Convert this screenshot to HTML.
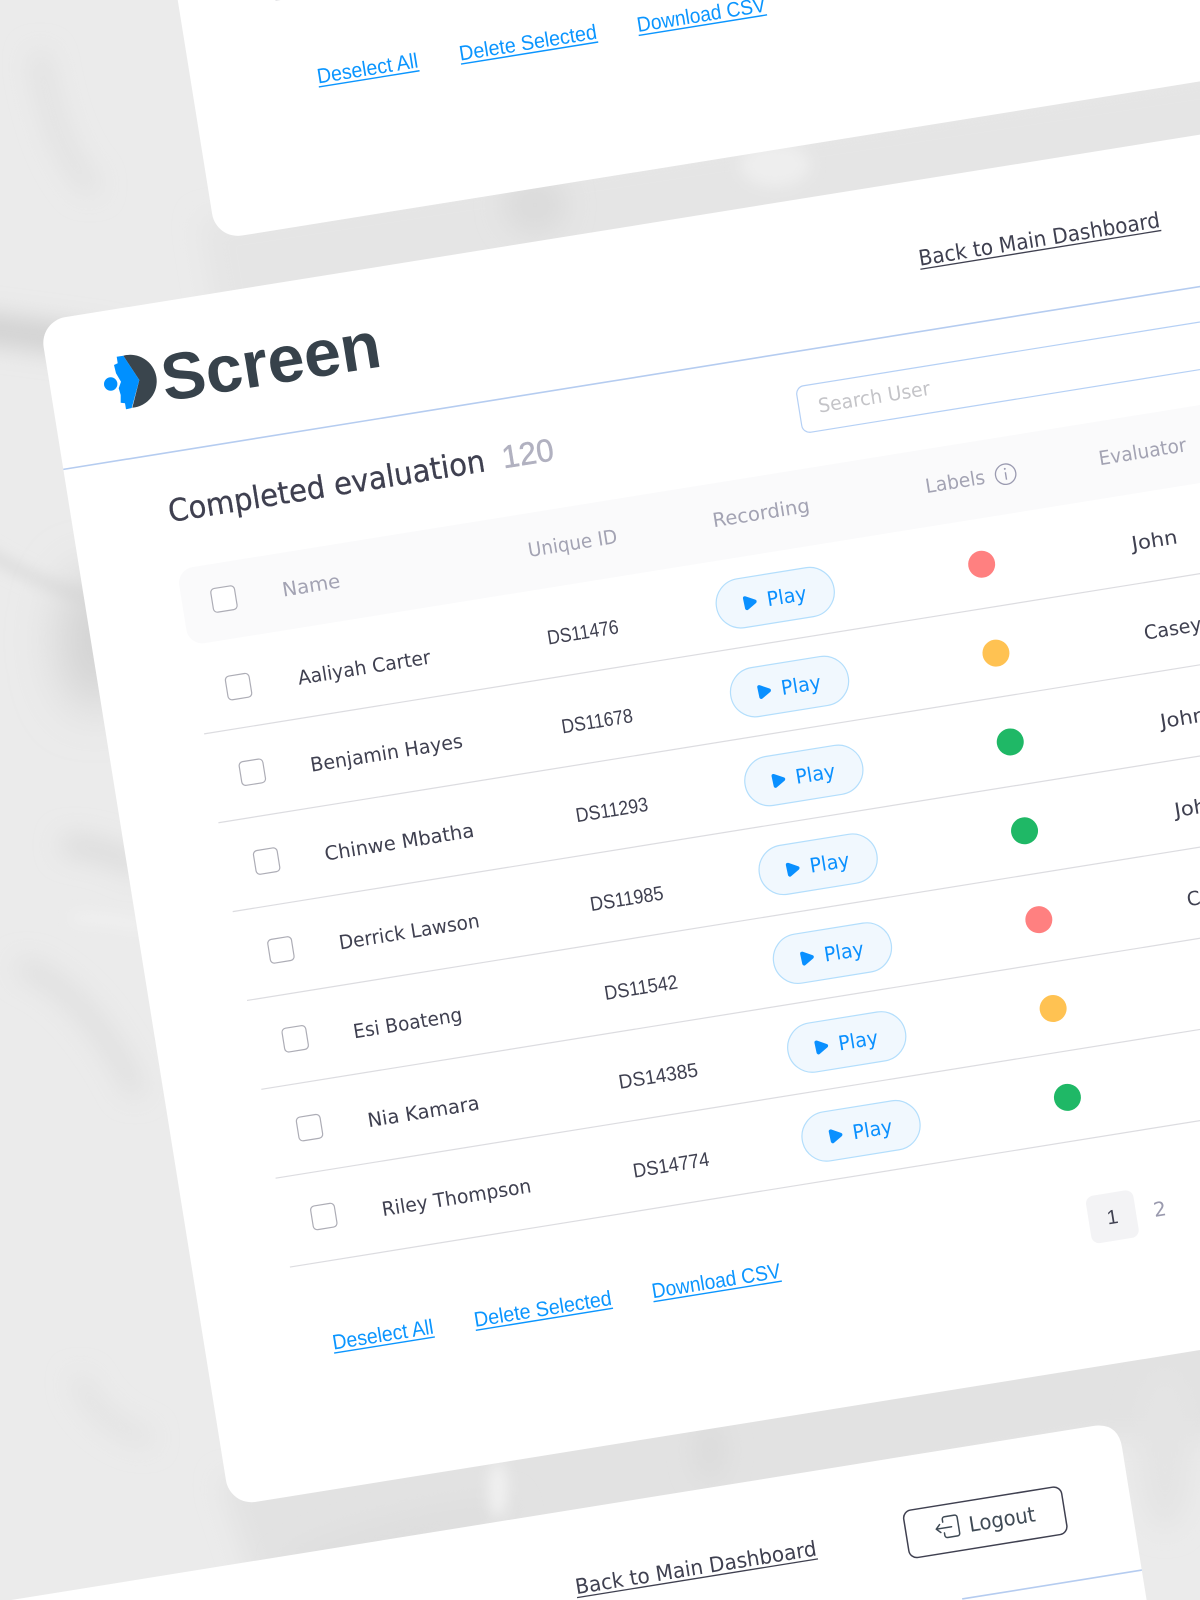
<!DOCTYPE html>
<html lang="en"><head><meta charset="utf-8"><title>Screen – Completed evaluation</title>
<style>
html,body{margin:0;padding:0;width:1200px;height:1600px;overflow:hidden;background:#ebebeb}
svg{display:block;overflow:hidden}
text{font-family:"DejaVu Sans","Liberation Sans",sans-serif;font-size:19.5px;fill:#3f4050;text-rendering:geometricPrecision}
.h{fill:#a3a3b3}
.l{font-family:"Liberation Sans",sans-serif;font-size:21px;fill:#0a95ff}
.p{fill:#0a90ff;font-size:20px}
.d{font-family:"Liberation Sans",sans-serif;font-size:20px}
.u{stroke:#0a95ff;stroke-width:1.4}
.r{stroke:#dcdce0;stroke-width:1.2}
.c{fill:#fff;stroke:#adadb6;stroke-width:1.2}
.b{fill:#f1f8fe;stroke:#b3defc;stroke-width:1.2}
.t{fill:#0a90ff;stroke:#0a90ff;stroke-width:4;stroke-linejoin:round}
</style></head><body>
<svg width="1200" height="1600" viewBox="0 0 1200 1600" xmlns="http://www.w3.org/2000/svg">
<defs>
<filter id="f8" filterUnits="userSpaceOnUse" x="-100" y="-100" width="1400" height="1800"><feGaussianBlur stdDeviation="7"/></filter>
<filter id="f14" filterUnits="userSpaceOnUse" x="-100" y="-100" width="1400" height="1800"><feGaussianBlur stdDeviation="13"/></filter>
<filter id="f24" filterUnits="userSpaceOnUse" x="-100" y="-100" width="1400" height="1800"><feGaussianBlur stdDeviation="24"/></filter>
</defs>
<rect width="1200" height="1600" fill="#ebebeb"/>
<!-- marble folds -->
<g fill="none" stroke-linecap="round">
<path d="M40 60Q55 150 90 185" stroke="#e0e0e0" stroke-width="18" filter="url(#f14)"/>
<path d="M-40 325Q40 335 110 345" stroke="#cccccc" stroke-width="26" filter="url(#f14)"/>
<path d="M-20 548Q40 585 90 598" stroke="#dadada" stroke-width="10" filter="url(#f8)"/>
<path d="M70 845Q110 850 135 865" stroke="#d8d8d8" stroke-width="18" filter="url(#f14)"/>
<path d="M75 918Q110 918 140 926" stroke="#f5f5f5" stroke-width="5" filter="url(#f8)"/>
<path d="M25 968Q85 990 135 1088" stroke="#dcdcdc" stroke-width="16" filter="url(#f14)"/>
<path d="M80 1382Q100 1425 145 1438" stroke="#e0e0e0" stroke-width="14" filter="url(#f14)"/>
</g>
<ellipse cx="95" cy="640" rx="35" ry="70" fill="#d2d2d2" filter="url(#f24)"/>
<!-- band between top and main card -->
<polygon points="200,220 1250,60 1250,170 220,340" fill="#e5e5e5" filter="url(#f14)"/>
<ellipse cx="535" cy="205" rx="32" ry="30" fill="#dbdbdb" filter="url(#f14)"/>
<ellipse cx="775" cy="165" rx="35" ry="22" fill="#eeeeee" filter="url(#f8)"/>
<!-- band between main and bottom card -->
<polygon points="220,1480 1230,1320 1230,1440 1100,1440 260,1600" fill="#e2e2e2" filter="url(#f14)"/>
<ellipse cx="400" cy="1535" rx="120" ry="18" fill="#dedede" filter="url(#f14)" transform="rotate(-14 400 1535)"/>
<ellipse cx="498" cy="1490" rx="9" ry="28" fill="#f2f2f2" filter="url(#f8)"/>
<ellipse cx="710" cy="1450" rx="14" ry="30" fill="#dadada" filter="url(#f14)"/>
<ellipse cx="1165" cy="1450" rx="28" ry="80" fill="#e4e4e4" filter="url(#f14)"/>

<!-- bottom card shape, trimmed to the frame -->
<path d="M11.3 1600L1092.300 1426.100Q1118 1422 1122.100 1447.700L1146.600 1600Z" fill="#fff"/>

<g transform="translate(39.5 321.3) rotate(-9.14)">
<!-- cards -->
<rect x="187.500" y="-1252.500" width="1440" height="1200" rx="26" fill="#fff"/>
<rect x="0" y="0" width="1440" height="1200" rx="26" fill="#fff"/>

<!-- top card remains -->
<line x1="284" y1="-279.500" x2="1400" y2="-279.500" class="r"/>
<text class="l" x="313" y="-190.500" textLength="102" lengthAdjust="spacingAndGlyphs">Deselect All</text>
<line class="u" x1="313" x2="415" y1="-187" y2="-187"/>
<text class="l" x="457" y="-190.500" textLength="139" lengthAdjust="spacingAndGlyphs">Delete Selected</text>
<line class="u" x1="457" x2="596" y1="-187" y2="-187"/>
<text class="l" x="637" y="-190.500" textLength="130" lengthAdjust="spacingAndGlyphs">Download CSV</text>
<line class="u" x1="637" x2="767" y1="-187" y2="-187"/>

<!-- header -->
<text x="111.500" y="99" style="font-family:'Liberation Sans',sans-serif;font-weight:700;font-size:66px;fill:#37424b" textLength="221" lengthAdjust="spacingAndGlyphs">Screen</text>
<text x="878" y="85" style="font-size:21.5px" textLength="244" lengthAdjust="spacingAndGlyphs">Back to Main Dashboard</text>
<line x1="878" x2="1122" y1="88.500" y2="88.500" stroke="#3f4050" stroke-width="1.3"/>
<line x1="0" x2="1440" y1="150" y2="150" stroke="#b5ccf0" stroke-width="1.6"/>

<!-- title -->
<text x="97" y="219" style="font-size:31px;stroke:#3f4050;stroke-width:.3" textLength="320.500" lengthAdjust="spacingAndGlyphs">Completed evaluation</text>
<text x="435" y="219" style="font-family:'Liberation Sans',sans-serif;font-size:32px;fill:#b1b1c0;stroke:#b1b1c0;stroke-width:.5" textLength="52" lengthAdjust="spacingAndGlyphs">120</text>
<rect x="736" y="185" width="759" height="47" rx="8" fill="#fff" stroke="#b5d0f5" stroke-width="1.2"/>
<text x="755.500" y="214" style="font-size:19.5px;fill:#c4c4c8" textLength="113" lengthAdjust="spacingAndGlyphs">Search User</text>

<!-- table head -->
<rect x="96" y="267" width="1344" height="77" rx="16" fill="#fafafb"/>
<rect class="c" x="126" y="291.500" width="24" height="24" rx="4"/>
<text class="h" x="197" y="310.500" textLength="58.500" lengthAdjust="spacingAndGlyphs">Name</text>
<text class="h" x="446" y="310.500" textLength="90" lengthAdjust="spacingAndGlyphs">Unique ID</text>
<text class="h" x="633" y="310.500" textLength="98" lengthAdjust="spacingAndGlyphs">Recording</text>
<text class="h" x="848.500" y="310.500" textLength="60" lengthAdjust="spacingAndGlyphs">Labels</text>
<circle cx="929.600" cy="304.400" r="10.200" fill="none" stroke="#9a9ab0" stroke-width="1.3"/>
<line x1="929.600" x2="929.600" y1="302.500" y2="310" stroke="#9a9ab0" stroke-width="1.4"/>
<circle cx="929.600" cy="299" r="1" fill="#9a9ab0"/>
<text class="h" x="1024" y="310.500" textLength="88.500" lengthAdjust="spacingAndGlyphs">Evaluator</text>

<!-- row 1 -->
<rect class="c" x="126.500" y="380.300" width="24" height="24" rx="4"/>
<text x="198.500" y="400" textLength="134" lengthAdjust="spacingAndGlyphs">Aaliyah Carter</text>
<text class="d" x="451" y="400" textLength="72" lengthAdjust="spacingAndGlyphs">DS11476</text>
<rect class="b" x="623" y="365" width="119" height="49.500" rx="24.700"/>
<polygon class="t" points="652.500,385.500 661.500,390.300 653,395.500"/>
<text class="p" x="674" y="397" textLength="40" lengthAdjust="spacingAndGlyphs">Play</text>
<circle cx="891.600" cy="389.500" r="13.500" fill="#ff8080"/>
<text x="1043" y="400" textLength="46" lengthAdjust="spacingAndGlyphs">John</text>
<line class="r" x1="97" x2="1440" y1="433.500" y2="433.500"/>

<!-- row 2 -->
<rect class="c" x="126.500" y="467" width="24" height="24" rx="4"/>
<text x="197" y="488" textLength="154" lengthAdjust="spacingAndGlyphs">Benjamin Hayes</text>
<text class="d" x="451" y="490" textLength="72" lengthAdjust="spacingAndGlyphs">DS11678</text>
<rect class="b" x="623" y="455" width="119" height="49.500" rx="24.700"/>
<polygon class="t" points="652.500,475.500 661.500,480.300 653,485.500"/>
<text class="p" x="674" y="487" textLength="40" lengthAdjust="spacingAndGlyphs">Play</text>
<circle cx="891.600" cy="479.500" r="13.500" fill="#ffc252"/>
<text x="1041" y="490" textLength="58" lengthAdjust="spacingAndGlyphs">Casey</text>
<line class="r" x1="97" x2="1440" y1="523.500" y2="523.500"/>

<!-- row 3 -->
<rect class="c" x="126.500" y="557" width="24" height="24" rx="4"/>
<text x="197" y="578" textLength="151" lengthAdjust="spacingAndGlyphs">Chinwe Mbatha</text>
<text class="d" x="451" y="580" textLength="73" lengthAdjust="spacingAndGlyphs">DS11293</text>
<rect class="b" x="623" y="545" width="119" height="49.500" rx="24.700"/>
<polygon class="t" points="652.500,565.500 661.500,570.300 653,575.500"/>
<text class="p" x="674" y="577" textLength="40" lengthAdjust="spacingAndGlyphs">Play</text>
<circle cx="891.600" cy="569.500" r="13.500" fill="#1fb866"/>
<text x="1043" y="580" textLength="46" lengthAdjust="spacingAndGlyphs">John</text>
<line class="r" x1="97" x2="1440" y1="613.500" y2="613.500"/>

<!-- row 4 -->
<rect class="c" x="126.500" y="647" width="24" height="24" rx="4"/>
<text x="197" y="668" textLength="142" lengthAdjust="spacingAndGlyphs">Derrick Lawson</text>
<text class="d" x="451" y="670" textLength="74" lengthAdjust="spacingAndGlyphs">DS11985</text>
<rect class="b" x="623" y="635" width="119" height="49.500" rx="24.700"/>
<polygon class="t" points="652.500,655.500 661.500,660.300 653,665.500"/>
<text class="p" x="674" y="667" textLength="40" lengthAdjust="spacingAndGlyphs">Play</text>
<circle cx="891.600" cy="659.500" r="13.500" fill="#1fb866"/>
<text x="1043" y="670" textLength="46" lengthAdjust="spacingAndGlyphs">John</text>
<line class="r" x1="97" x2="1440" y1="703.500" y2="703.500"/>

<!-- row 5 -->
<rect class="c" x="126.500" y="737" width="24" height="24" rx="4"/>
<text x="197" y="758" textLength="110" lengthAdjust="spacingAndGlyphs">Esi Boateng</text>
<text class="d" x="451" y="760" textLength="74" lengthAdjust="spacingAndGlyphs">DS11542</text>
<rect class="b" x="623" y="725" width="119" height="49.500" rx="24.700"/>
<polygon class="t" points="652.500,745.500 661.500,750.300 653,755.500"/>
<text class="p" x="674" y="757" textLength="40" lengthAdjust="spacingAndGlyphs">Play</text>
<circle cx="891.600" cy="749.500" r="13.500" fill="#ff8080"/>
<text x="1041" y="760" textLength="58" lengthAdjust="spacingAndGlyphs">Casey</text>
<line class="r" x1="97" x2="1440" y1="793.500" y2="793.500"/>

<!-- row 6 -->
<rect class="c" x="126.500" y="827" width="24" height="24" rx="4"/>
<text x="197" y="848" textLength="113" lengthAdjust="spacingAndGlyphs">Nia Kamara</text>
<text class="d" x="451" y="850" textLength="80" lengthAdjust="spacingAndGlyphs">DS14385</text>
<rect class="b" x="623" y="815" width="119" height="49.500" rx="24.700"/>
<polygon class="t" points="652.500,835.500 661.500,840.300 653,845.500"/>
<text class="p" x="674" y="847" textLength="40" lengthAdjust="spacingAndGlyphs">Play</text>
<circle cx="891.600" cy="839.500" r="13.500" fill="#ffc252"/>
<line class="r" x1="97" x2="1440" y1="883.500" y2="883.500"/>

<!-- row 7 -->
<rect class="c" x="126.500" y="917" width="24" height="24" rx="4"/>
<text x="197" y="938" textLength="151" lengthAdjust="spacingAndGlyphs">Riley Thompson</text>
<text class="d" x="451" y="940" textLength="77" lengthAdjust="spacingAndGlyphs">DS14774</text>
<rect class="b" x="623" y="905" width="119" height="49.500" rx="24.700"/>
<polygon class="t" points="652.500,925.500 661.500,930.300 653,935.500"/>
<text class="p" x="674" y="937" textLength="40" lengthAdjust="spacingAndGlyphs">Play</text>
<circle cx="891.600" cy="929.500" r="13.500" fill="#1fb866"/>
<line class="r" x1="97" x2="1440" y1="973.500" y2="973.500"/>

<!-- pagination -->
<rect x="893" y="1030.500" width="48" height="48" rx="8" fill="#f3f3f5"/>
<text x="917" y="1061.500" text-anchor="middle" style="font-family:'Liberation Sans',sans-serif;font-size:20px">1</text>
<text x="965" y="1061.500" text-anchor="middle" style="font-size:20px;fill:#9a9aae">2</text>

<!-- footer links -->
<text class="l" x="127" y="1062" textLength="102" lengthAdjust="spacingAndGlyphs">Deselect All</text>
<line class="u" x1="127" x2="229" y1="1065.500" y2="1065.500"/>
<text class="l" x="270.500" y="1062" textLength="139" lengthAdjust="spacingAndGlyphs">Delete Selected</text>
<line class="u" x1="270.500" x2="409.500" y1="1065.500" y2="1065.500"/>
<text class="l" x="450.500" y="1062" textLength="130" lengthAdjust="spacingAndGlyphs">Download CSV</text>
<line class="u" x1="450.500" x2="580.500" y1="1065.500" y2="1065.500"/>

<!-- bottom card -->
<text x="328" y="1342" style="font-size:21px" textLength="244" lengthAdjust="spacingAndGlyphs">Back to Main Dashboard</text>
<line x1="328" x2="572" y1="1345.500" y2="1345.500" stroke="#3f4050" stroke-width="1.3"/>
<rect x="663" y="1312" width="160" height="48" rx="8" fill="#fff" stroke="#3f4050" stroke-width="1.5"/>
<path d="M701 1329v-2.500a2.500 2.500 0 0 1 2.500-2.500h10a2.500 2.500 0 0 1 2.500 2.500v16a2.500 2.500 0 0 1-2.500 2.500h-10a2.500 2.500 0 0 1-2.500-2.500v-2.500M709 1335h-15.500M697.500 1331l-4 4 4 4" fill="none" stroke="#3f4a55" stroke-width="1.5" stroke-linecap="round" stroke-linejoin="round"/>
<text x="726.500" y="1343" style="font-size:21px;fill:#3f4a55" textLength="67" lengthAdjust="spacingAndGlyphs">Logout</text>
<line x1="708" x2="890" y1="1408" y2="1408" stroke="#b5ccf0" stroke-width="1.6"/>
</g>

<!-- logo mark (screen coordinates) -->
<path d="M123.300 355.700A26.500 26.500 0 1 1 132.300 407.700L139.300 380Z" fill="#3a454d"/>
<polygon points="116.700,356.700 123.300,355.700 139.300,380 131.700,408 126,409.300 125,403.300 120.700,402.700 120.700,395 118.700,388.300 121,381.700 116,373.300 114,365 117.700,363.300" fill="#0090ff"/>
<circle cx="110.700" cy="384" r="6.700" fill="#0090ff"/>
</svg>
</body></html>
